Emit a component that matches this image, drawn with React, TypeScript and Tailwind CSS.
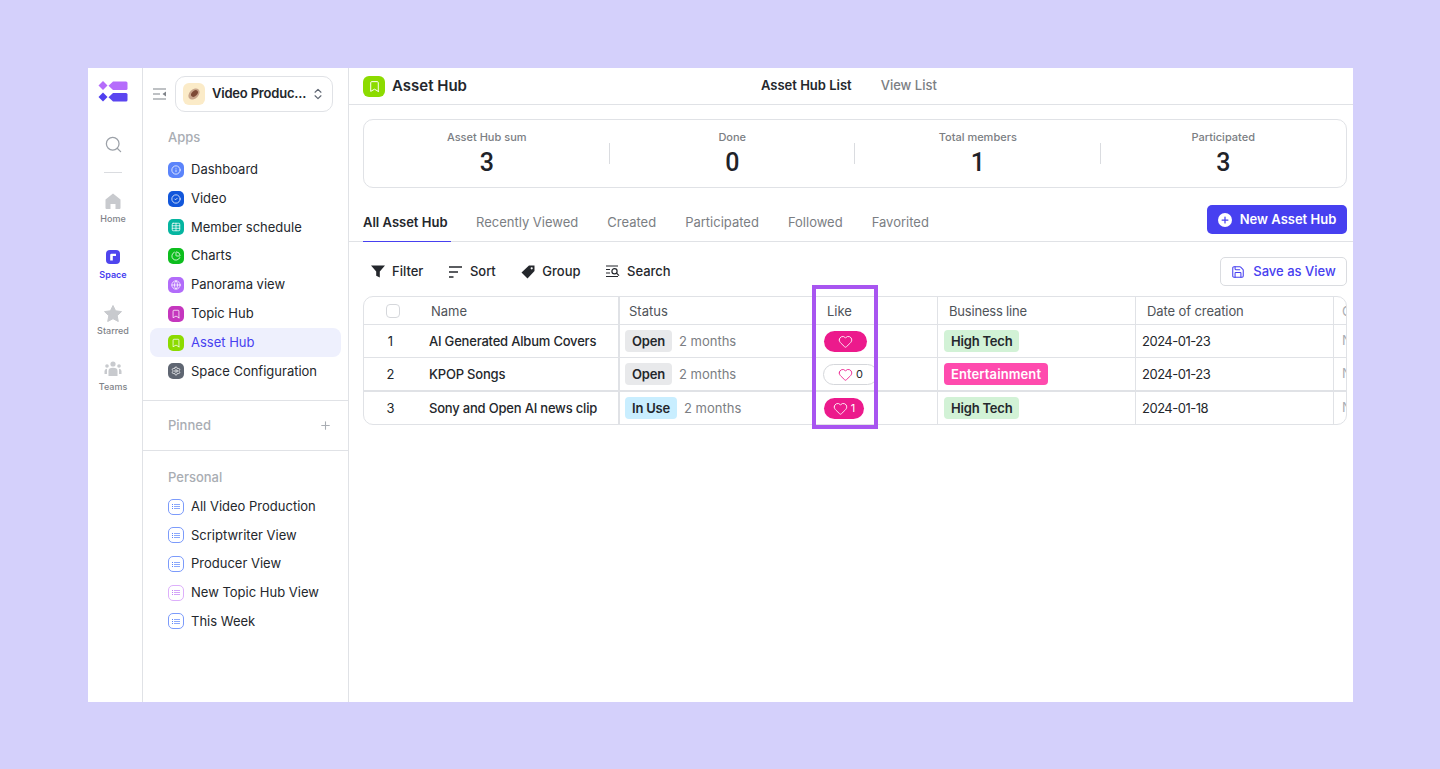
import {
  Info,
  CircleCheck,
  Table,
  ChartPie,
  Globe,
  Bookmark,
  Settings,
  Plus,
  Search,
  Save,
  ChevronsUpDown,
  Heart,
} from "lucide-react";
import type { ReactNode } from "react";

const apps = [
  { label: "Dashboard", color: "bg-[#5B84FB]", Icon: Info },
  { label: "Video", color: "bg-[#1257DB]", Icon: CircleCheck },
  { label: "Member schedule", color: "bg-[#05B5A0]", Icon: Table },
  { label: "Charts", color: "bg-[#0DBE1E]", Icon: ChartPie },
  { label: "Panorama view", color: "bg-[#B26CFA]", Icon: Globe },
  { label: "Topic Hub", color: "bg-[#C536BE]", Icon: Bookmark },
  { label: "Asset Hub", color: "bg-[#8CDB00]", Icon: Bookmark, active: true },
  { label: "Space Configuration", color: "bg-[#5F6672]", Icon: Settings },
];

const views = [
  { label: "All Video Production", color: "border-[#7C9BFB] text-[#5B84FB]" },
  { label: "Scriptwriter View", color: "border-[#7C9BFB] text-[#5B84FB]" },
  { label: "Producer View", color: "border-[#7C9BFB] text-[#5B84FB]" },
  { label: "New Topic Hub View", color: "border-[#DDB0FB] text-[#C27FF5]" },
  { label: "This Week", color: "border-[#7C9BFB] text-[#5B84FB]" },
];

const stats = [
  { label: "Asset Hub sum", value: "3" },
  { label: "Done", value: "0" },
  { label: "Total members", value: "1" },
  { label: "Participated", value: "3" },
];

const tabs = ["Recently Viewed", "Created", "Participated", "Followed", "Favorited"];

function Logo() {
  return (
    <svg width="30" height="22" viewBox="0 0 30 22">
      <path d="M5 1 L9.5 5.5 L5 10 L0.5 5.5 Z" fill="#B56CFB" />
      <path d="M15 1.5 H28 Q29.5 1.5 29.5 3 V8.5 Q29.5 10 28 10 H15 L10.5 5.75 Z" fill="#B56CFB" />
      <path d="M5 12.5 L9.5 17 L5 21.5 L0.5 17 Z" fill="#4F3FEF" />
      <path d="M15 13 H28 Q29.5 13 29.5 14.5 V20 Q29.5 21.5 28 21.5 H15 L10.5 17.25 Z" fill="#5B45F0" />
    </svg>
  );
}

function RailItem({ label, active, children }: { label: string; active?: boolean; children: ReactNode }) {
  return (
    <div className="flex h-[56px] flex-col items-center">
      <div className="flex h-[20px] w-[20px] items-center justify-center">{children}</div>
      <span className={`mt-[2px] text-[9px] leading-[12px] font-medium ${active ? "font-semibold text-[#4740F0]" : "text-[#7F8389]"}`}>
        {label}
      </span>
    </div>
  );
}

function Rail() {
  return (
    <div className="flex w-[55px] shrink-0 flex-col items-center border-r border-[#E0E2E6] pr-[4px]">
      <div className="mt-[12px]">
        <Logo />
      </div>
      <Search className="mt-[33px] h-[19px] w-[19px] text-[#9CA1A8]" strokeWidth={1.6} />
      <div className="mt-[18px] h-px w-[18px] bg-[#DADCE0]" />
      <div className="mt-[18px] flex flex-col">
        <RailItem label="Home">
          <svg width="16" height="16" viewBox="0 0 16 16">
            <path d="M8 0.5 L15.5 6.5 V15 Q15.5 16 14.5 16 H10.5 V11 H5.5 V16 H1.5 Q0.5 16 0.5 15 V6.5 Z" fill="#C8CACE" />
          </svg>
        </RailItem>
        <RailItem label="Space" active>
          <svg width="14" height="14" viewBox="0 0 14 14">
            <rect width="14" height="14" rx="4" fill="#4F45EE" />
            <path d="M4.2 10.5 V5 Q4.2 3.8 5.4 3.8 H10 V6 H6.8 V10.5 Z" fill="#fff" />
          </svg>
        </RailItem>
        <RailItem label="Starred">
          <svg width="18" height="17" viewBox="0 0 18 17">
            <path d="M9 0.5 L11.6 5.8 L17.5 6.6 L13.2 10.7 L14.3 16.5 L9 13.7 L3.7 16.5 L4.8 10.7 L0.5 6.6 L6.4 5.8 Z" fill="#C8CACE" stroke="#C8CACE" strokeLinejoin="round" />
          </svg>
        </RailItem>
        <RailItem label="Teams">
          <svg width="18" height="16" viewBox="0 0 18 16">
            <circle cx="9" cy="3" r="2.6" fill="#C8CACE" />
            <circle cx="3" cy="5" r="1.8" fill="#C8CACE" />
            <circle cx="15" cy="5" r="1.8" fill="#C8CACE" />
            <path d="M4.5 15 V10 Q4.5 6.8 9 6.8 Q13.5 6.8 13.5 10 V15 Z" fill="#C8CACE" />
            <path d="M0.5 13 V10 Q0.5 8 3 7.8 V13 Z M17.5 13 V10 Q17.5 8 15 7.8 V13 Z" fill="#C8CACE" />
          </svg>
        </RailItem>
      </div>
    </div>
  );
}

function AppRow({ label, color, Icon, active }: (typeof apps)[number]) {
  return (
    <div className={`mx-[7px] flex h-[28.8px] items-center gap-[7px] rounded-lg pl-[18px] ${active ? "bg-[#EEF0FD]" : ""}`}>
      <span className={`flex h-4 w-4 items-center justify-center rounded-[5px] ${color}`}>
        <Icon className="h-[10px] w-[10px] text-white" strokeWidth={1.8} />
      </span>
      <span className={`text-[13px] ${active ? "text-[#4740F0]" : "text-[#24272C]"}`}>{label}</span>
    </div>
  );
}

function ViewRow({ label, color }: { label: string; color: string }) {
  return (
    <div className="ml-[25px] flex h-[28.7px] items-center gap-[7px]">
      <span className={`flex h-4 w-4 flex-col items-center justify-center gap-[1px] rounded-[5px] border ${color}`}>
        {[0, 1, 2].map((i) => (
          <span key={i} className="flex w-[8px] gap-[1px]">
            <span className="h-px w-px bg-current" />
            <span className="h-px flex-1 bg-current opacity-70" />
          </span>
        ))}
      </span>
      <span className="text-[13px] text-[#24272C]">{label}</span>
    </div>
  );
}

function Sidebar() {
  return (
    <div className="flex w-[206px] shrink-0 flex-col border-r border-[#E0E2E6]">
      <div className="mt-[8px] flex items-center pl-[10px]">
        <svg width="14" height="12" viewBox="0 0 14 12" fill="none" stroke="#7F8389" strokeWidth="1.2">
          <path d="M0 1 H13 M0 6 H7 M0 11 H13" />
          <path d="M13 3.5 V8.5 L9.5 6 Z" fill="#7F8389" stroke="none" />
        </svg>
        <div className="ml-[8px] flex h-[36px] w-[158px] items-center rounded-[10px] border border-[#E0E2E6] pl-[7px]">
          <span className="flex h-[22px] w-[22px] shrink-0 items-center justify-center rounded-md bg-[#FBEBC8]">
            <svg width="14" height="14" viewBox="0 0 14 14">
              <ellipse cx="7" cy="7" rx="6.5" ry="4.5" transform="rotate(-45 7 7)" fill="#C9A68C" />
              <ellipse cx="7.5" cy="6.5" rx="4" ry="2.6" transform="rotate(-45 7.5 6.5)" fill="#7D4A35" />
            </svg>
          </span>
          <span className="ml-[7px] text-[13px] font-semibold tracking-[-0.2px] whitespace-nowrap text-[#24272C]">Video Produc...</span>
          <ChevronsUpDown className="ml-[5px] h-[14px] w-[14px] shrink-0 text-[#5F6672]" />
        </div>
      </div>
      <div className="mt-[17px] pl-[25px] text-[13px] leading-[16px] font-medium text-[#A9ADB3]">Apps</div>
      <div className="mt-[10.4px] flex flex-col">
        {apps.map((a) => (
          <AppRow key={a.label} {...a} />
        ))}
      </div>
      <div className="mt-[14.6px] flex h-[51px] items-center justify-between border-y border-[#E0E2E6] pr-[16px] pl-[25px]">
        <span className="text-[13px] font-medium text-[#A9ADB3]">Pinned</span>
        <Plus className="h-[13px] w-[13px] text-[#A9ADB3]" />
      </div>
      <div className="mt-[18px] pl-[25px] text-[13px] leading-[16px] font-medium text-[#A9ADB3]">Personal</div>
      <div className="mt-[7px] flex flex-col">
        {views.map((v) => (
          <ViewRow key={v.label} {...v} />
        ))}
      </div>
    </div>
  );
}

function Tool({ label, children }: { label: string; children: ReactNode }) {
  return (
    <div className="flex items-center gap-[7px]">
      <span className="flex h-[14px] w-[14px] items-center justify-center">{children}</span>
      <span className="text-[13px] font-medium text-[#24272C]">{label}</span>
    </div>
  );
}

function Tag({ className, children }: { className: string; children: ReactNode }) {
  return (
    <span className={`flex h-[22px] items-center rounded-[4px] px-[7px] pt-px text-[13px] font-semibold ${className}`}>
      {children}
    </span>
  );
}

function LikePill({ count, className, heart }: { count?: string; className: string; heart: string }) {
  return (
    <span className={`flex h-[21px] shrink-0 items-center justify-center gap-[3px] rounded-full text-[11px] leading-none ${className}`}>
      <Heart className={`h-[15px] w-[15px] ${heart}`} strokeWidth={1.4} />
      {count && <span>{count}</span>}
    </span>
  );
}

const rows = [
  {
    no: "1",
    name: "AI Generated Album Covers",
    status: <Tag className="bg-[#E8E9EB] tracking-[-0.2px] text-[#24272C]">Open</Tag>,
    like: <LikePill className="ml-[9px] w-[43px] bg-[#EC1A8C]" heart="text-white" />,
    biz: <Tag className="bg-[#D2F2D6] tracking-[-0.2px] text-[#24272C]">High Tech</Tag>,
    date: "2024-01-23",
    border: "h-[33px] border-b border-[#E0E2E6]",
  },
  {
    no: "2",
    name: "KPOP Songs",
    status: <Tag className="bg-[#E8E9EB] tracking-[-0.2px] text-[#24272C]">Open</Tag>,
    like: <LikePill count="0" className="ml-[8px] w-[55px] border border-[#D5D7DB] text-[#24272C]" heart="text-[#EC1A8C]" />,
    biz: <Tag className="bg-[#FF4BAE] tracking-[0.1px] text-white">Entertainment</Tag>,
    date: "2024-01-23",
    border: "h-[34px] border-b-2 border-[#E0E2E6]",
  },
  {
    no: "3",
    name: "Sony and Open AI news clip",
    status: <Tag className="bg-[#C9EEFF] tracking-[-0.2px] text-[#24272C]">In Use</Tag>,
    like: <LikePill count="1" className="ml-[9px] w-[40px] bg-[#EC1A8C] text-white" heart="text-white" />,
    biz: <Tag className="bg-[#D2F2D6] tracking-[-0.2px] text-[#24272C]">High Tech</Tag>,
    date: "2024-01-18",
    border: "h-[32px]",
  },
];

const gridCols = "grid grid-cols-[53px_201px_197px_123px_198px_198px_12px]";

function DataTable() {
  return (
    <div className="mt-[10px] mr-[6px] ml-[14px] overflow-hidden rounded-[10px] border border-[#E0E2E6]">
      <div className={`${gridCols} h-[28px] border-b border-[#E0E2E6] text-[13px] text-[#4F5359]`}>
        <div className="flex items-center justify-center pl-[4px]">
          <span className="h-[14px] w-[14px] rounded-[4px] border border-[#D5D7DB]" />
        </div>
        <div className="flex items-center pt-[2px] pl-[14px]">Name</div>
        <div className="flex items-center border-l-2 border-[#E0E2E6] pt-[2px] pl-[9px]">Status</div>
        <div className="flex items-center border-r border-[#E0E2E6] pt-[2px] pl-[12px]">Like</div>
        <div className="flex items-center border-r border-[#E0E2E6] pt-[2px] pl-[11px] tracking-[-0.2px]">Business line</div>
        <div className="flex items-center border-r border-[#E0E2E6] pt-[2px] pl-[11px] tracking-[-0.1px]">Date of creation</div>
        <div className="flex items-center overflow-hidden pt-[2px] pl-[8px] text-[#A9ADB3]">Creator</div>
      </div>
      {rows.map((r) => (
        <div key={r.no} className={`${gridCols} ${r.border} text-[13px]`}>
          <div className="flex items-center justify-center pt-px text-[#24272C]">{r.no}</div>
          <div className="flex items-center pt-px pl-[12px] font-medium tracking-[-0.2px] whitespace-nowrap text-[#24272C]">{r.name}</div>
          <div className="flex items-center gap-[7px] border-l-2 border-[#E0E2E6] pl-[5px]">
            {r.status}
            <span className="pt-px text-[#7B7E83]">2 months</span>
          </div>
          <div className="flex items-center overflow-hidden border-r border-[#E0E2E6]">{r.like}</div>
          <div className="flex items-center border-r border-[#E0E2E6] pl-[6px]">{r.biz}</div>
          <div className="flex items-center border-r border-[#E0E2E6] pt-px pl-[6px] tracking-[-0.5px] text-[#24272C]">{r.date}</div>
          <div className="flex items-center overflow-hidden pl-[8px] text-[#A9ADB3]">None</div>
        </div>
      ))}
    </div>
  );
}

function Main() {
  return (
    <div className="flex min-w-0 flex-1 flex-col">
      <div className="flex h-[37px] items-center border-b border-[#E0E2E6] pl-[14px]">
        <span className="flex h-[21px] w-[22px] items-center justify-center rounded-[6px] bg-[#8CDB00]">
          <Bookmark className="h-[13px] w-[13px] text-white" strokeWidth={1.8} />
        </span>
        <span className="ml-[7px] text-[15px] font-semibold text-[#24272C]">Asset Hub</span>
        <span className="ml-[294px] text-[13px] font-semibold text-[#24272C]">Asset Hub List</span>
        <span className="ml-[29px] text-[13px] font-medium text-[#7B7E83]">View List</span>
      </div>

      <div className="mt-[14px] mr-[6px] ml-[14px] grid h-[69px] grid-cols-4 rounded-[10px] border border-[#E0E2E6]">
        {stats.map((s, i) => (
          <div key={s.label} className="relative flex flex-col items-center pt-[10px]">
            <span className="text-[11px] leading-[14px] font-medium text-[#7B7E83]">{s.label}</span>
            <span className="mt-[4px] font-['Roboto',sans-serif] text-[25px] leading-[30px] font-medium text-[#1F2329]">{s.value}</span>
            {i < 3 && <span className="absolute top-[23px] right-0 h-[21px] w-px bg-[#DADCE0]" />}
          </div>
        ))}
      </div>

      <div className="mt-[17px] flex h-[37px] items-stretch justify-between border-b border-[#E0E2E6] pr-[6px] pl-[14px]">
        <div className="flex items-stretch gap-[29px]">
          <div className="-mb-px flex w-[88px] items-center border-b border-[#4740F0] text-[13px] font-semibold text-[#24272C]">
            All Asset Hub
          </div>
          {tabs.map((t, i) => (
            <div key={t} className={`flex items-center text-[13px] text-[#7B7E83] ${i === 0 ? "-ml-[4px]" : ""}`}>
              {t}
            </div>
          ))}
        </div>
        <div className="flex h-[29px] w-[140px] items-center justify-center gap-[8px] rounded-[5px] bg-[#4740F0] text-[13px] font-semibold text-white">
          <span className="flex h-[14px] w-[14px] items-center justify-center rounded-full bg-white">
            <Plus className="h-[10px] w-[10px] text-[#4740F0]" strokeWidth={3} />
          </span>
          New Asset Hub
        </div>
      </div>

      <div className="mt-[15px] flex h-[29px] items-center justify-between pr-[6px] pl-[22px]">
        <div className="flex items-center gap-[25.5px]">
          <Tool label="Filter">
            <svg width="14" height="13" viewBox="0 0 14 13">
              <path d="M0 0.5 H14 L8.8 6.5 V12.5 L5.2 10.8 V6.5 Z" fill="#24272C" />
            </svg>
          </Tool>
          <Tool label="Sort">
            <svg width="13" height="12" viewBox="0 0 13 12" fill="none" stroke="#24272C" strokeWidth="1.5">
              <path d="M0 1 H13 M0 6 H9 M0 11 H4.5" />
            </svg>
          </Tool>
          <Tool label="Group">
            <svg width="14" height="14" viewBox="0 0 14 14">
              <path d="M8 0.5 H13.5 V6 L6.5 13.5 L0.5 7.5 Z" fill="#24272C" />
              <circle cx="10.7" cy="3.3" r="1.1" fill="#fff" />
            </svg>
          </Tool>
          <Tool label="Search">
            <svg width="14" height="13" viewBox="0 0 14 13" fill="none" stroke="#24272C" strokeWidth="1.2">
              <path d="M0 1 H12 M0 4.5 H4 M0 8 H4 M0 11.5 H12" />
              <circle cx="8.5" cy="6.2" r="2.6" />
              <path d="M10.5 8.2 L13 10.7" />
            </svg>
          </Tool>
        </div>
        <div className="flex h-[29px] w-[127px] items-center justify-center gap-[8px] rounded-[5px] border border-[#DADCE0] text-[13px] font-medium text-[#4740F0]">
          <Save className="h-[14px] w-[14px]" strokeWidth={1.8} />
          Save as View
        </div>
      </div>

      <DataTable />
    </div>
  );
}

export default function App() {
  return (
    <div className="relative h-[769px] overflow-hidden bg-[#D4D0FB] pt-[68px] pl-[88px] font-['Inter',sans-serif]">
      <div className="flex h-[634px] w-[1265px] bg-white">
        <Rail />
        <Sidebar />
        <Main />
      </div>
      {/* highlight around the Like column */}
      <div className="absolute top-[285px] left-[812px] h-[144px] w-[66px] border-[4px] border-[#A855F0]" />
    </div>
  );
}
